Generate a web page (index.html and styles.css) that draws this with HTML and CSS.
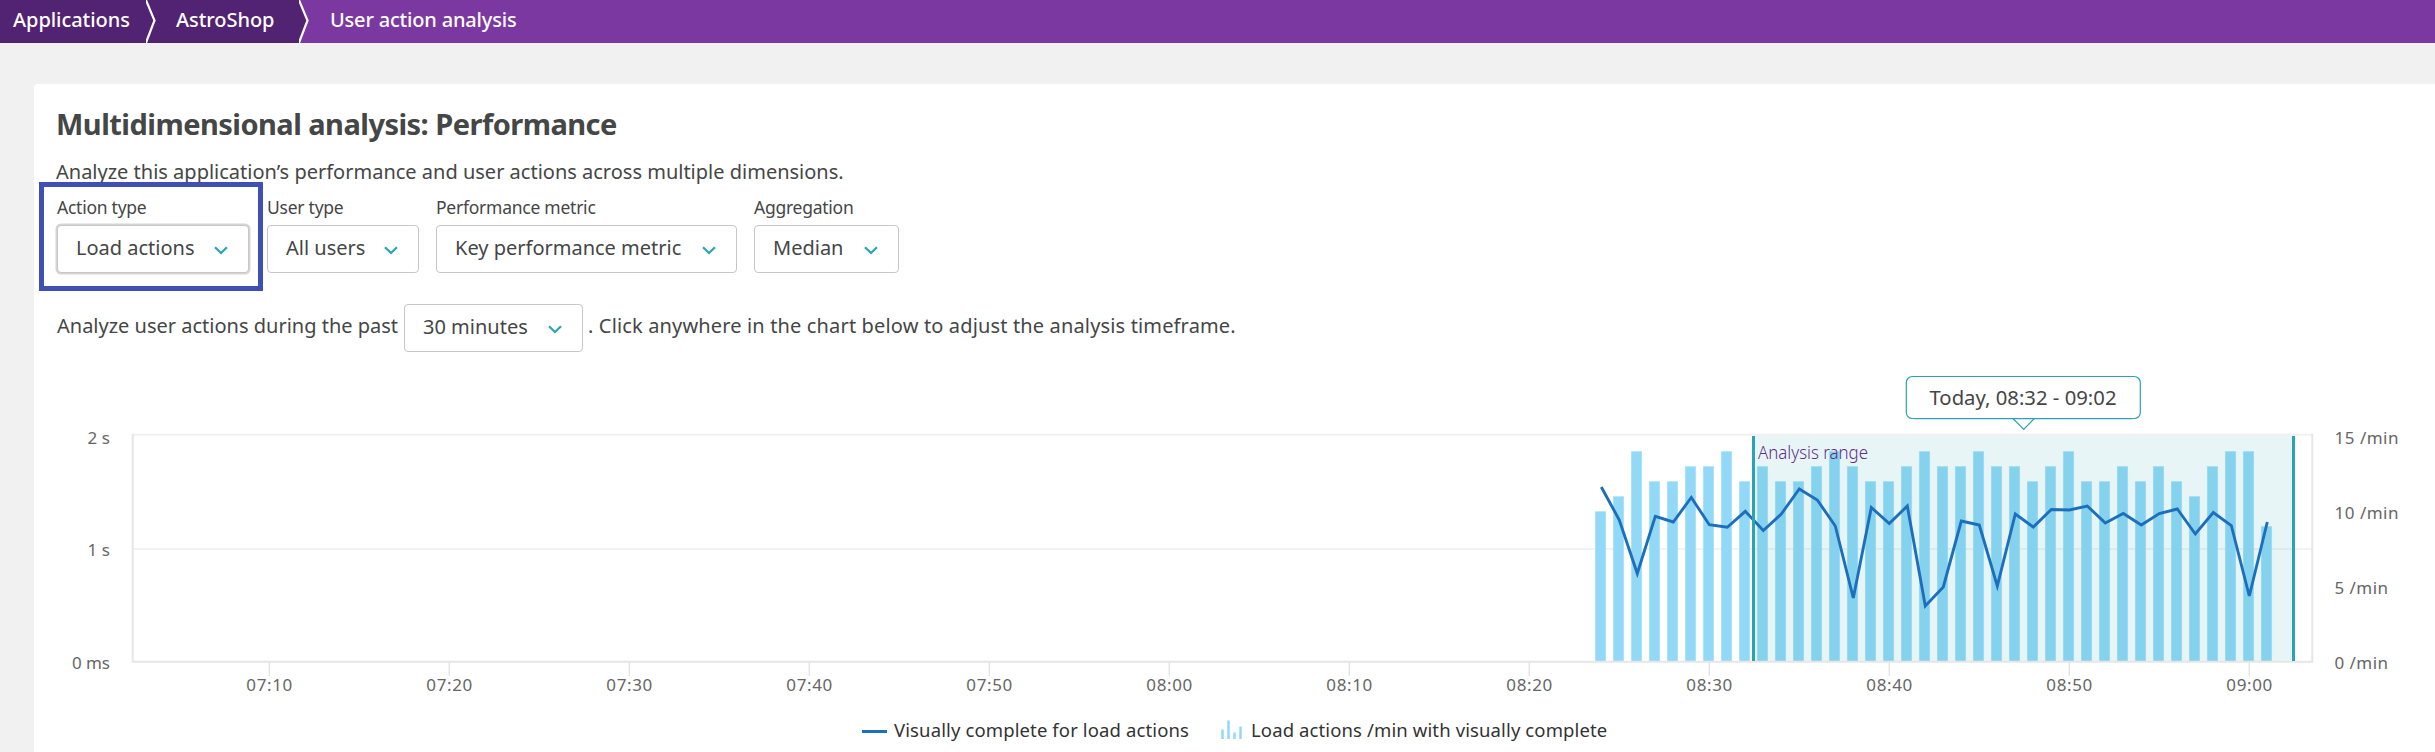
FILE: index.html
```html
<!DOCTYPE html>
<html lang="en">
<head>
<meta charset="utf-8">
<title>User action analysis</title>
<link rel="stylesheet" href="styles.css">
</head>
<body>
<nav class="crumbs">
  <a class="crumb crumb-first"><span>Applications</span></a>
  <svg class="sep" width="12" height="43" viewBox="0 0 12 43"><path class="sep-next" d="M0 0H12V43H0Z"/><path class="sep-line" d="M-.5 -1L8.500 20.500L-.5 44"/></svg>
  <a class="crumb crumb-second"><span>AstroShop</span></a>
  <svg class="sep" width="12" height="43" viewBox="0 0 12 43"><path class="sep-dark" d="M-1 0L8.500 20.500L-1 43Z"/><path class="sep-line" d="M-.5 -1L8.500 20.500L-.5 44"/></svg>
  <a class="crumb-current"><span>User action analysis</span></a>
</nav>
<main class="panel">
  <h1 class="title"><span>Multidimensional analysis: Performance</span></h1>
  <p class="intro"><span>Analyze this application’s performance and user actions across multiple dimensions.</span></p>
  <div class="filters">
    <div class="field field-action"><label><span>Action type</span></label><div class="select focused"><span>Load actions</span><svg class="chev" viewBox="0 0 14 9"><path d="M1 1.200L7 7L13 1.200"/></svg></div><div class="highlight"></div></div>
    <div class="field field-user"><label><span>User type</span></label><div class="select"><span>All users</span><svg class="chev" viewBox="0 0 14 9"><path d="M1 1.200L7 7L13 1.200"/></svg></div></div>
    <div class="field field-metric"><label><span>Performance metric</span></label><div class="select"><span>Key performance metric</span><svg class="chev" viewBox="0 0 14 9"><path d="M1 1.200L7 7L13 1.200"/></svg></div></div>
    <div class="field field-agg"><label><span>Aggregation</span></label><div class="select"><span>Median</span><svg class="chev" viewBox="0 0 14 9"><path d="M1 1.200L7 7L13 1.200"/></svg></div></div>
  </div>
  <div class="timeframe">
    <span class="before">Analyze user actions during the past</span>
    <div class="select"><span>30 minutes</span><svg class="chev" viewBox="0 0 14 9"><path d="M1 1.200L7 7L13 1.200"/></svg></div>
    <span class="after">. Click anywhere in the chart below to adjust the analysis timeframe.</span>
  </div>
  <svg class="chart" id="chart" width="2401" height="330" viewBox="34 370 2401 330"></svg>
  <div class="legend">
    <svg class="key-line" width="25" height="3"><rect width="25" height="3"/></svg>
    <span class="legend-a">Visually complete for load actions</span>
    <svg class="key-bars" width="22" height="20"><path d="M1.500 9.500V19M7.500 .5V19M13.500 12.500V19M19.500 6.500V19"/></svg>
    <span class="legend-b">Load actions /min with visually complete</span>
  </div>
</main>
<script src="chart.js"></script>
</body>
</html>
```

FILE: styles.css
```css
* { box-sizing: border-box; }
body { margin: 0; height: 752px; overflow: hidden; background: #f1f1f1; color: #454646; font-family: "Noto Sans", "Open Sans", sans-serif; font-size: 20px; font-weight: 400; white-space: nowrap; }
.crumbs { display: flex; height: 43px; background: #7c38a1; color: #fff; line-height: 39px; font-weight: 500; }
.crumb { background: #522273; }
.crumb-first { width: 146px; padding-left: 13px; letter-spacing: -.05px; }
.crumb-second { width: 141px; padding-left: 18px; letter-spacing: -.05px; }
.crumb-current { padding-left: 19px; letter-spacing: -.18px; }
.sep { flex: none; }
.sep-dark, .sep-next { fill: #522273; }
.sep-line { fill: none; stroke: #fff; stroke-width: 2.2; }
.panel { margin: 41px 0 0 34px; padding: 15px 0 0 23px; height: 668px; background: #fff; border-top-left-radius: 4px; }
.title { margin: 0 0 0 -1px; height: 48px; line-height: 50px; font-size: 29px; font-weight: 700; letter-spacing: -.53px; }
.intro { margin: 0 0 0 -1px; height: 48px; line-height: 50px; letter-spacing: 0; }
.filters { display: flex; }
.field { position: relative; }
.field label { display: block; height: 30px; line-height: 25px; font-size: 17.500px; letter-spacing: -.25px; }
.field-action { width: 192px; margin-right: 18px; }
.field-user { width: 152px; margin-right: 17px; }
.field-metric { width: 301px; margin-right: 17px; }
.field-agg { width: 145px; }
.select { display: flex; justify-content: space-between; align-items: center; height: 48px; padding: 0 20px 0 18px; border: 1px solid #c7c7c7; border-radius: 4px; background: #fff; line-height: 42px; }
.select span { padding-bottom: 2px; }
.focused { box-shadow: 0 0 0 1.500px #d5d5d5; }
.chev { width: 14px; height: 9px; margin-top: 2px; flex: none; }
.chev path { fill: none; stroke: #2ba3b3; stroke-width: 2.2; }
.highlight { position: absolute; left: -18px; top: -13px; width: 224px; height: 109px; border: 5px solid #404fb4; }
.timeframe { display: flex; height: 48px; margin-top: 31px; line-height: 44px; }
.before { width: 347px; }
.after { letter-spacing: .15px; }
.timeframe .select { width: 179px; margin-right: 5px; }
.chart { display: block; margin: 18px 0 0 -23px; }
.chart text { fill: #666; font-size: 17px; }
.frame { fill: none; stroke: #e6e6e6; stroke-width: 2; }
.grid { stroke: #efefef; stroke-width: 1.500; }
.frame-top { stroke: #f0f0f0; stroke-width: 2; }
.tick { stroke: #e2e2e2; stroke-width: 1.300; }
.bar { fill: #92d9f8; stroke: #a9e0f8; stroke-width: .7; }
.range { fill: #0f9ba5; fill-opacity: .1; }
.handle { fill: #2ba3b3; }
.series { fill: none; stroke: #1c6fbc; stroke-width: 2.900; }
.tip { fill: #fff; stroke: #2ba3b3; stroke-width: 1.200; }
.chart .tip-text { fill: #454646; font-size: 20px; }
.chart .range-text { fill: #5f2c8a; font-size: 17.500px; font-weight: 300; }
.legend { display: flex; align-items: center; height: 52px; padding: 0 0 0 805px; line-height: 52px; font-size: 18.500px; color: #333; }
.legend span { margin-top: 7px; letter-spacing: .12px; }
.key-line { fill: #1c6fbc; margin-top: 11px; }
.legend-a { width: 327px; margin-left: 7px; }
.key-bars { fill: none; stroke: #92d9f8; stroke-width: 2.500; margin-top: 7px; }
.legend-b { margin-left: 8px; }
```

FILE: chart.js
```js
const bars = [10,11,14,12,12,13,13,14,12,13,12,12,13,14,13,12,12,13,14,13,13,14,13,13,12,13,14,12,12,13,12,13,12,11,13,14,14,9];
const ys = [487,520,573.5,516.3,522,497.5,524.7,527.3,511.3,530.5,514,489,500,526,598,507.5,523.5,506,606,587,521,525,586,514,527,509.5,510,506,523,513.5,525,513.5,509,534,512.5,525.5,596,522];
const text = (x, y, w, s, c = '') => `<text class="${c}" x="${x}" y="${y}" textLength="${w}" lengthAdjust="${c ? 'spacingAndGlyphs' : 'spacing'}">${s}</text>`;
let out = '<path class="grid" d="M133 549H2312"/>';
bars.forEach((v, i) => { out += `<rect class="bar" x="${1595.3 + i * 18}" y="${661.7 - v * 15}" width="10.4" height="${v * 15}"/>`; });
out += '<rect class="range" x="1753" y="435.500" width="540" height="225.500"/>';
out += '<path class="frame-top" d="M132 434.800H2313"/><path class="frame" d="M132.700 434V661.700H2312.300V434"/>';
['07:10','07:20','07:30','07:40','07:50','08:00','08:10','08:20','08:30','08:40','08:50','09:00'].forEach((s, i) => {
  const x = 269.3 + i * 180;
  out += `<path class="tick" d="M${x} 662V676"/>` + text(x - 23, 690.7, 46, s);
});
out += `<polyline class="series" points="${ys.map((y, i) => (1601.3 + i * 18) + ',' + y).join(' ')}"/>`;
out += '<rect class="handle" x="1752" y="436" width="3" height="225"/><rect class="handle" x="2292" y="436" width="3" height="225"/>';
out += text(87.5, 444, 22.5, '2 s') + text(87.5, 556, 22.5, '1 s') + text(72, 669, 38, '0 ms');
out += text(2334.5, 444, 64, '15 /min') + text(2334.5, 519, 64, '10 /min') + text(2334.5, 594, 53.5, '5 /min') + text(2334.5, 669, 53.5, '0 /min');
out += text(1758, 459, 110, 'Analysis range', 'range-text');
out += '<rect class="tip" x="1906.300" y="376.500" width="234" height="42" rx="6"/><path class="tip" d="M2013 418.500L2023.700 429.300L2034.400 418.500"/><path class="handle" d="M1914 418H2132V419.200H1914Z"/>';
out += text(1929.5, 405, 187, 'Today, 08:32 - 09:02', 'tip-text');
document.getElementById('chart').innerHTML = out;
```
